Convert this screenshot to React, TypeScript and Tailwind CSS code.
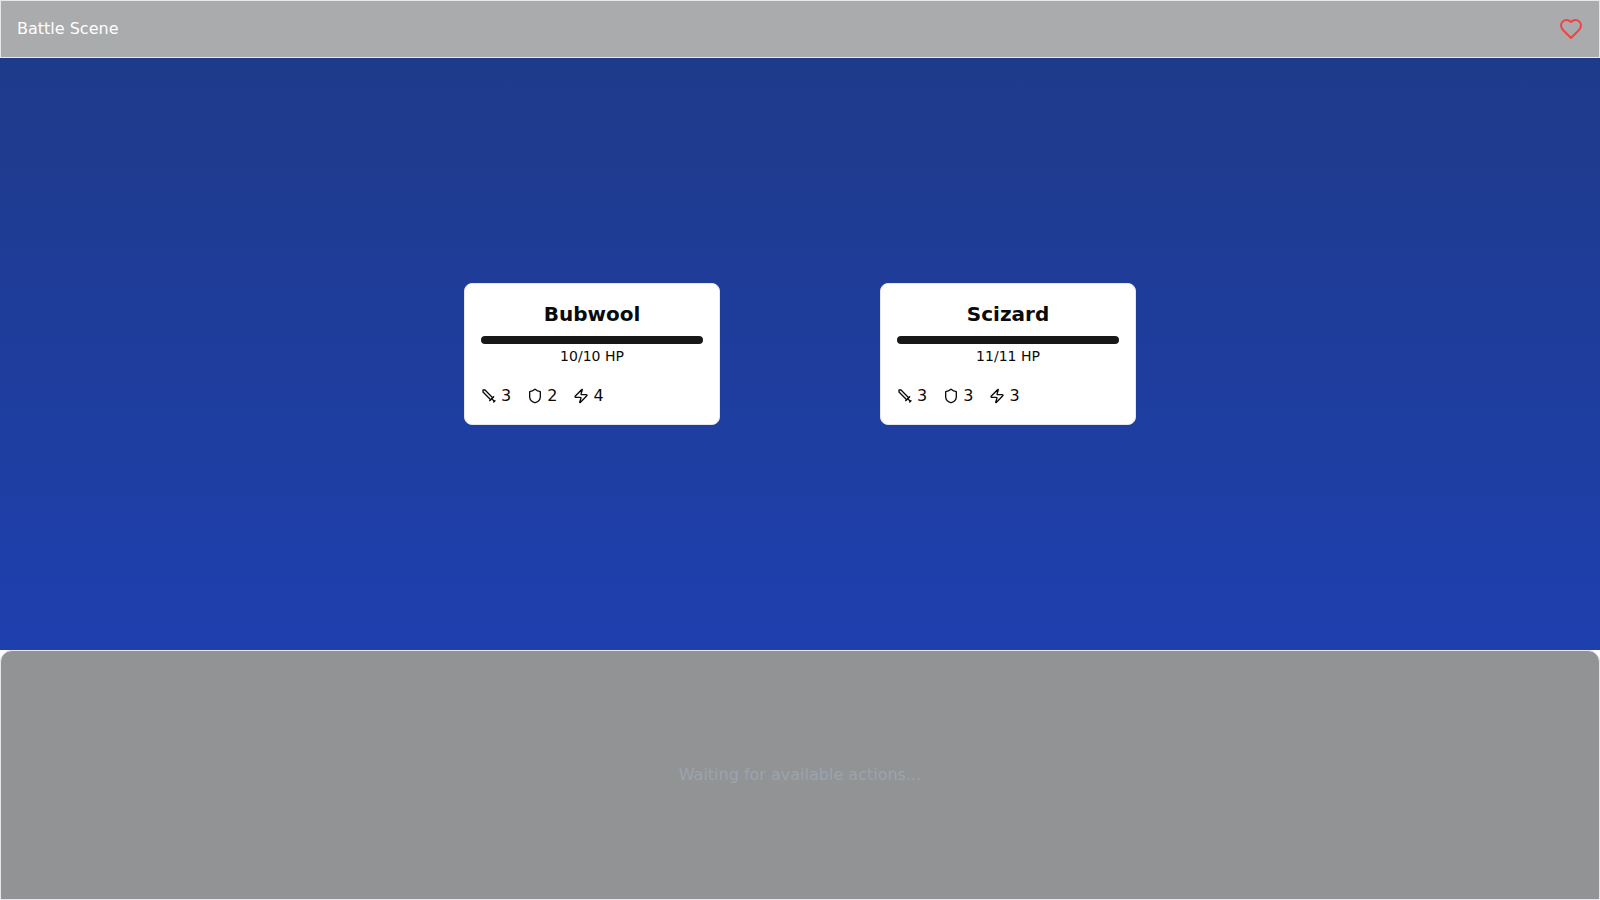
import type { ReactNode } from 'react';
import { Shield, Zap } from 'lucide-react';

interface Creature {
  name: string;
  hp: number;
  maxHp: number;
  attack: number;
  defense: number;
  speed: number;
}

const creatures: Creature[] = [
  { name: 'Bubwool', hp: 10, maxHp: 10, attack: 3, defense: 2, speed: 4 },
  { name: 'Scizard', hp: 11, maxHp: 11, attack: 3, defense: 3, speed: 3 },
];

function Icon({ className, children }: { className: string; children: ReactNode }) {
  return (
    <svg
      viewBox="0 0 24 24"
      fill="none"
      stroke="currentColor"
      strokeWidth="2"
      strokeLinecap="round"
      strokeLinejoin="round"
      aria-hidden="true"
      className={className}
    >
      {children}
    </svg>
  );
}

function SwordIcon({ className }: { className: string }) {
  return (
    <Icon className={className}>
      <polyline points="14.5 17.5 3 6 3 3 6 3 17.5 14.5" />
      <line x1="13" x2="19" y1="19" y2="13" />
      <line x1="16" x2="20" y1="16" y2="20" />
      <line x1="19" x2="21" y1="21" y2="19" />
    </Icon>
  );
}

function HeartIcon({ className }: { className: string }) {
  return (
    <Icon className={className}>
      <path d="M19 14c1.49-1.46 3-3.21 3-5.5A5.5 5.5 0 0 0 16.5 3c-1.76 0-3 .5-4.5 2-1.5-1.5-2.74-2-4.5-2A5.5 5.5 0 0 0 2 8.5c0 2.3 1.5 4.05 3 5.5l7 7Z" />
    </Icon>
  );
}

function CreatureCard({ creature }: { creature: Creature }) {
  const { name, hp, maxHp, attack, defense, speed } = creature;
  return (
    <article className="w-64 rounded-lg border border-gray-200 bg-white p-4 text-neutral-950">
      <h2 className="mb-2 text-center text-xl font-bold">{name}</h2>
      <div
        role="progressbar"
        aria-label={`${name} HP`}
        aria-valuenow={hp}
        aria-valuemax={maxHp}
        className="h-2 overflow-hidden rounded-full bg-neutral-200"
      >
        <div className="h-full bg-neutral-900" style={{ width: `${(hp / maxHp) * 100}%` }} />
      </div>
      <p className="mt-0.5 mb-4.5 text-center text-sm">
        {hp}/{maxHp} HP
      </p>
      <div className="flex gap-4">
        <span className="flex items-center gap-1">
          <SwordIcon className="size-4" />
          {attack}
        </span>
        <span className="flex items-center gap-1">
          <Shield className="size-4" />
          {defense}
        </span>
        <span className="flex items-center gap-1">
          <Zap className="size-4" />
          {speed}
        </span>
      </div>
    </article>
  );
}

export default function App() {
  return (
    <div className="flex h-screen flex-col bg-white font-['DejaVu_Sans',sans-serif]">
      <header className="flex items-center justify-between border border-gray-200 bg-[#a9abac] p-4 text-white">
        <h1>Battle Scene</h1>
        <HeartIcon className="size-6 text-[#ef4444]" />
      </header>
      <main className="flex flex-1 items-center justify-center gap-40 bg-linear-to-b from-[#1e3a8a] to-[#1e40af]">
        {creatures.map((creature) => (
          <CreatureCard key={creature.name} creature={creature} />
        ))}
      </main>
      <footer className="flex h-[250px] items-center justify-center rounded-t-xl border border-gray-200 bg-[#919394] text-[#9ca3af]">
        <p>Waiting for available actions...</p>
      </footer>
    </div>
  );
}
